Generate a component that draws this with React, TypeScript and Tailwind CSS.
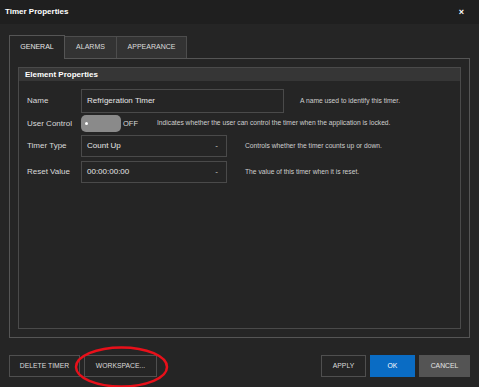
import { useState } from 'react';

const font = { fontFamily: '"Liberation Sans", Arial, sans-serif' };

function Chevron() {
  return <span className="text-[8px] leading-none text-[#cfcfcf]">-</span>;
}

export default function App() {
  const [tab, setTab] = useState('GENERAL');
  const tabs = [
    { name: 'GENERAL', w: 'w-[56px]' },
    { name: 'ALARMS', w: 'w-[52px]' },
    { name: 'APPEARANCE', w: 'w-[70px]' },
  ];

  return (
    <div className="w-[479px] h-[387px] bg-[#252525] text-[#e0e0e0] flex flex-col overflow-hidden" style={font}>
      {/* title bar */}
      <div className="h-6 bg-[#1f1f1f] flex items-center justify-between pl-[5px] pr-[15px]">
        <span className="text-[8px] font-bold text-white">Timer Properties</span>
        <span className="text-[9px] font-bold text-white leading-none">×</span>
      </div>

      <div className="flex-1 flex flex-col px-[9px] pt-[11px]">
        {/* tabs */}
        <div className="flex h-[23px] items-end">
          {tabs.map((t) => (
            <button
              key={t.name}
              onClick={() => setTab(t.name)}
              className={
                t.name === tab
                  ? `${t.w} h-[24px] text-[7px] text-[#e6e6e6] border border-b-0 border-[#555] bg-[#252525] relative top-[1px] z-10`
                  : `${t.w} h-[22px] text-[7px] text-[#dcdcdc] border border-b-0 border-l-0 border-[#4d4d4d] bg-[#333]`
              }
            >
              {t.name}
            </button>
          ))}
        </div>

        {/* content box */}
        <div className="h-[280px] border border-[#555] p-[8px]">
          <div className="h-full border border-[#4a4a4a] flex flex-col">
            <div className="h-[13px] bg-[#363636] flex items-center pl-[6px] text-[8px] font-bold text-white">
              Element Properties
            </div>
            <div className="flex flex-col pt-[8px] pl-[8px] text-[8px] text-[#dadada]">
              <div className="flex items-center h-[24px]">
                <span className="w-[54px]">Name</span>
                <div className="w-[203px] h-[24px] border border-[#4a4a4a] flex items-center px-[5px] text-[#e6e6e6]">
                  Refrigeration Timer
                </div>
                <span className="ml-[16px] text-[6.7px] text-[#cfcfcf]">A name used to identify this timer.</span>
              </div>
              <div className="flex items-center h-[17px] mt-[2px]">
                <span className="w-[54px]">User Control</span>
                <div className="w-[40px] h-[17px] rounded-[5px] bg-[#8a8a8a] flex items-center pl-[4px]">
                  <span className="w-[3px] h-[3px] rounded-full bg-white" />
                </div>
                <span className="ml-[2px] w-[34px] text-[7.5px]">OFF</span>
                <span className="text-[6.7px] text-[#cfcfcf]">
                  Indicates whether the user can control the timer when the application is locked.
                </span>
              </div>
              <div className="flex items-center h-[22px] mt-[3px]">
                <span className="w-[54px]">Timer Type</span>
                <div className="w-[146px] h-[22px] border border-[#4a4a4a] flex items-center justify-between px-[5px] pr-[8px] text-[#e6e6e6]">
                  Count Up <Chevron />
                </div>
                <span className="ml-[18px] text-[6.7px] text-[#cfcfcf]">Controls whether the timer counts up or down.</span>
              </div>
              <div className="flex items-center h-[22px] mt-[4px]">
                <span className="w-[54px]">Reset Value</span>
                <div className="w-[146px] h-[22px] border border-[#4a4a4a] flex items-center justify-between px-[5px] pr-[8px] text-[#e6e6e6]">
                  00:00:00:00 <Chevron />
                </div>
                <span className="ml-[18px] text-[6.7px] text-[#cfcfcf]">The value of this timer when it is reset.</span>
              </div>
            </div>
          </div>
        </div>

        {/* footer */}
        <div className="relative flex items-center mt-[17px] h-[22px] gap-[4px] text-[6.8px]">
          <button className="h-[22px] w-[71px] border border-[#4f4f4f] text-[#dcdcdc]">DELETE TIMER</button>
          <button className="h-[22px] w-[73px] border border-[#4f4f4f] text-[#dcdcdc]">WORKSPACE...</button>
          <div className="flex-1" />
          <button className="h-[22px] w-[45px] border border-[#4f4f4f] text-[#dcdcdc]">APPLY</button>
          <button className="h-[22px] w-[45px] bg-[#0a6cc4] text-white">OK</button>
          <button className="h-[22px] w-[51px] bg-[#545454] text-[#e6e6e6]">CANCEL</button>
          <svg className="absolute left-[65px] top-[-9px] pointer-events-none" width="96" height="44" viewBox="0 0 96 44">
            <ellipse cx="47.5" cy="21" rx="45.5" ry="19.5" fill="none" stroke="#e8101a" strokeWidth="2.5" />
          </svg>
        </div>
      </div>
    </div>
  );
}
